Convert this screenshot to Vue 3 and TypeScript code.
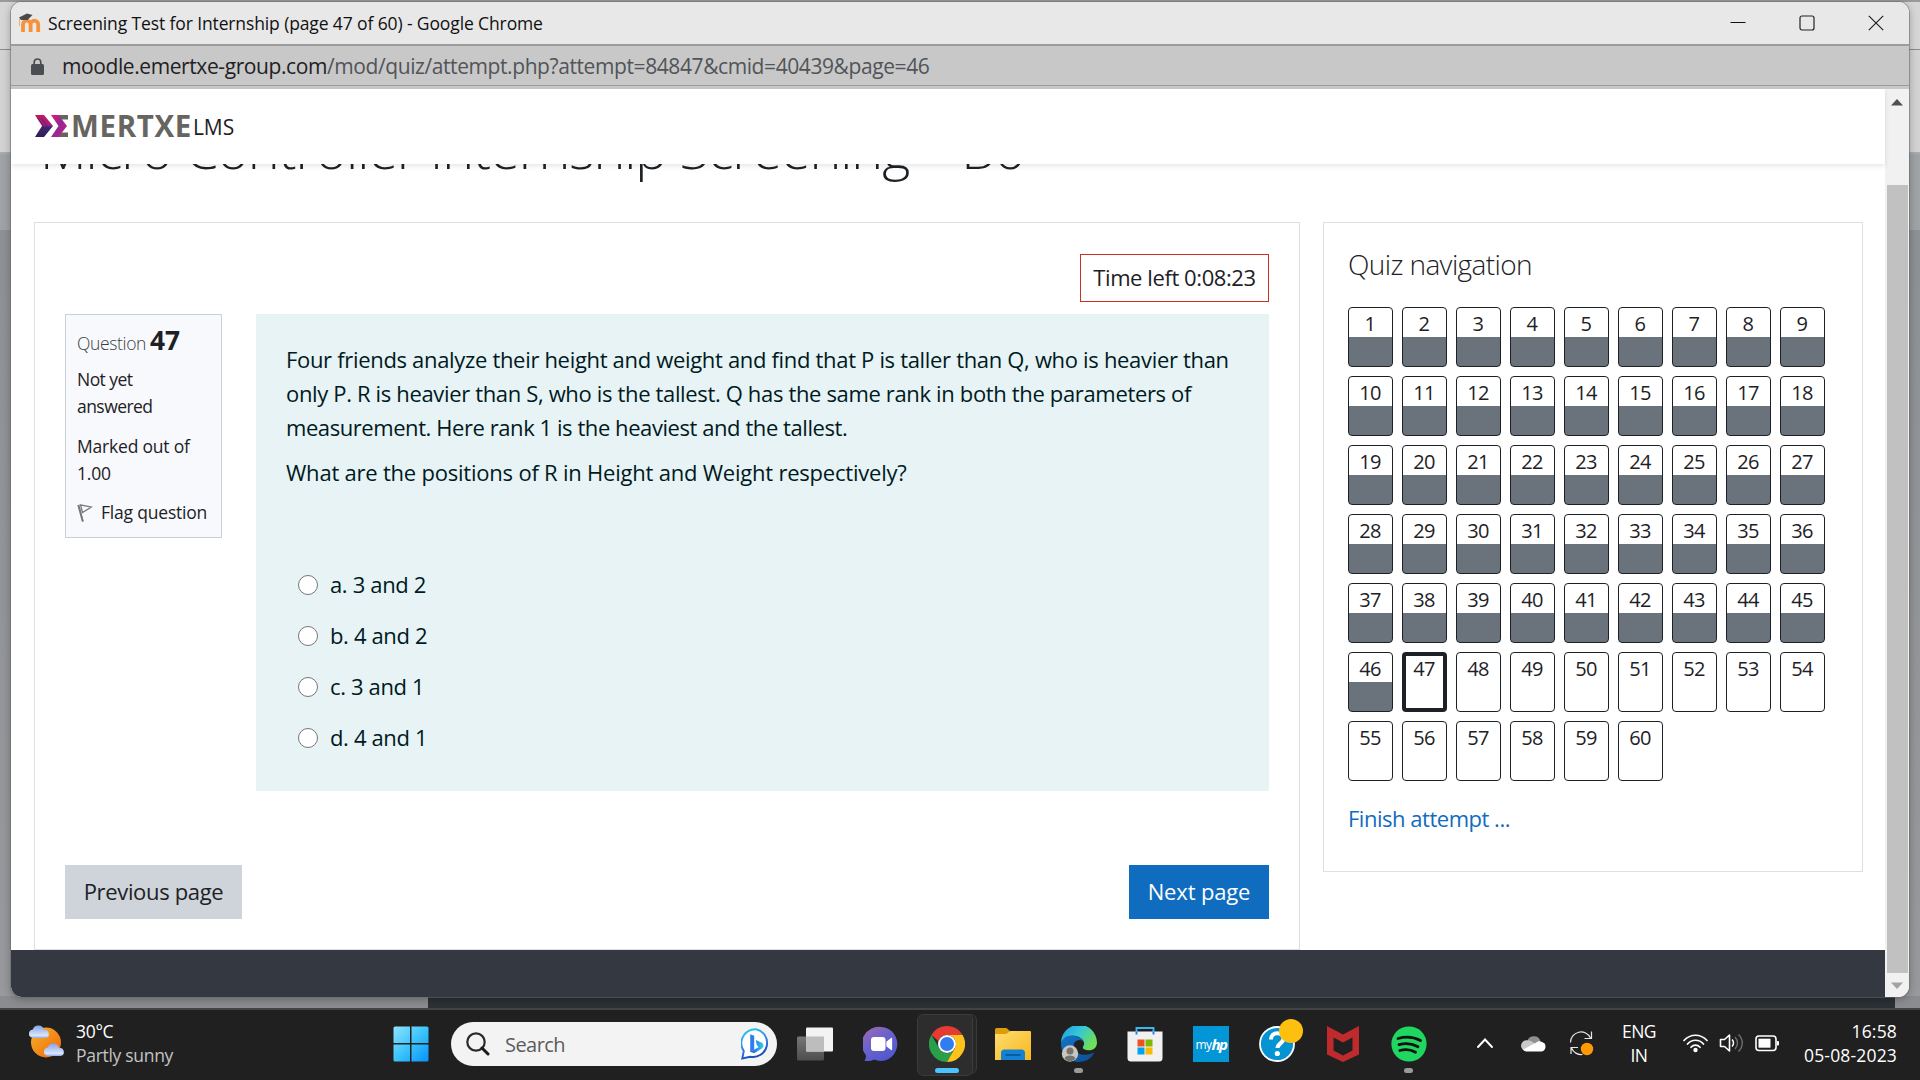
<script setup lang="ts">
interface Option {
  letter: string
  text: string
}

const options: Option[] = [
  { letter: 'a', text: '3 and 2' },
  { letter: 'b', text: '4 and 2' },
  { letter: 'c', text: '3 and 1' },
  { letter: 'd', text: '4 and 1' },
]

const currentQuestion = 47
const questions = Array.from({ length: 60 }, (_, i) => i + 1)
</script>

<template>
  <div class="desktop">
    <div class="backdrop">
      <div class="back-tabs"></div>
      <div class="back-toolbar"></div>
      <div class="back-page"></div>
      <div class="back-footer"><span></span></div>
    </div>

    <section class="window">
      <header class="titlebar">
        <svg class="favicon" width="24" height="22" viewBox="0 0 24 22">
          <path d="M5 20V12.500a3.700 3.700 0 0 1 7.600 0V20M12.600 20V12.500a3.700 3.700 0 0 1 7.600 0V20" fill="none" stroke="#f7923a" stroke-width="3.800" />
          <path d="M1 5.500 9 1.500l5.500 1.500-5 5L3 8z" fill="#4a4a4a" />
          <path d="M1.500 6v8" stroke="#e5b48c" stroke-width="1" />
        </svg>
        <span class="title">Screening Test for Internship (page 47 of 60) - Google Chrome</span>
        <div class="controls">
          <svg width="16" height="16" viewBox="0 0 16 16"><path d="M.5 7.500h15" stroke="#111" stroke-width="1.200" /></svg>
          <svg width="16" height="16" viewBox="0 0 16 16"><rect x="1" y="1" width="14" height="14" rx="2" fill="none" stroke="#222" stroke-width="1.200" /></svg>
          <svg width="16" height="16" viewBox="0 0 16 16"><path d="M.8.800l14.400 14.400M15.200.800.8 15.200" stroke="#222" stroke-width="1.200" /></svg>
        </div>
      </header>

      <div class="urlbar">
        <svg width="13" height="17" viewBox="0 0 13 17">
          <path d="M3.200 7V4.300a3.300 3.300 0 0 1 6.600 0V7" fill="none" stroke="#4a4d51" stroke-width="1.700" />
          <rect x="0" y="6" width="13" height="11" rx="1.500" fill="#4a4d51" />
        </svg>
        <span class="url"><b>moodle.emertxe-group.com</b>/mod/quiz/attempt.php?attempt=84847&amp;cmid=40439&amp;page=46</span>
      </div>

      <div class="viewport">
        <div class="page">
          <nav class="navbar">
            <svg class="mark" width="36" height="22" viewBox="0 0 36 22">
              <defs>
                <linearGradient id="mk1" x1="0" y1="0" x2="0" y2="1">
                  <stop offset="0" stop-color="#c2185f" /><stop offset=".48" stop-color="#9a1f86" />
                  <stop offset=".55" stop-color="#3a2a74" /><stop offset="1" stop-color="#2a2050" />
                </linearGradient>
                <linearGradient id="mk2" x1="0" y1="0" x2="1" y2="1">
                  <stop offset="0" stop-color="#e2187c" /><stop offset=".5" stop-color="#8e2a94" /><stop offset="1" stop-color="#e2187c" />
                </linearGradient>
              </defs>
              <path d="M22 0h11v4.500h-8zM22 22h11v-4.500h-8z" fill="#67655f" />
              <path d="M0 0h9l9 11-9 11H0l7-11z" fill="url(#mk1)" />
              <path d="M2.500 3l6 8-6 8M6 3l6 8-6 8" fill="none" stroke="#5b1550" stroke-width=".7" />
              <path d="M16 0h7.500l8.500 11-8.500 11H16l7.500-11z" fill="url(#mk2)" />
            </svg>
            <span class="brand">MERTXE</span><span class="lms">LMS</span>
          </nav>

          <h1 class="heading">Micro Controller Internship Screening - <span>B6</span></h1>

          <div class="columns">
            <main class="quiz">
              <div class="timer">Time left 0:08:23</div>

              <div class="question">
                <aside class="info">
                  <div class="qno"><span>Question</span><strong>47</strong></div>
                  <div class="state">Not yet<br />answered</div>
                  <div class="grade">Marked out of<br />1.00</div>
                  <div class="flag">
                    <svg width="16" height="18" viewBox="0 0 16 18">
                      <path d="M1.500 1l4.500 16.500M3.500.800 14.500 3 5.500 8.500z" fill="none" stroke="#777" stroke-width="1.300" />
                      <path d="M1.300 1 5.800 17.500" stroke="#777" stroke-width="1.900" />
                    </svg>
                    <span>Flag question</span>
                  </div>
                </aside>

                <div class="formulation">
                  <p>
                    <span class="l1">Four friends analyze their height and weight and find that P is taller than Q, who is heavier than</span><br />
                    <span class="l2">only P. R is heavier than S, who is the tallest. Q has the same rank in both the parameters of</span><br />
                    <span class="l3">measurement. Here rank 1 is the heaviest and the tallest.</span>
                  </p>
                  <p class="l4">What are the positions of R in Height and Weight respectively?</p>
                  <div class="options">
                    <label v-for="o in options" :key="o.letter">
                      <i class="radio"></i><span>{{ o.letter }}. {{ o.text }}</span>
                    </label>
                  </div>
                </div>
              </div>

              <div class="actions">
                <button class="btn prev">Previous page</button>
                <button class="btn next">Next page</button>
              </div>
            </main>

            <aside class="quiznav">
              <h2>Quiz navigation</h2>
              <div class="grid">
                <a
                  v-for="n in questions"
                  :key="n"
                  class="cell"
                  :class="{ saved: n < currentQuestion, current: n === currentQuestion }"
                ><span>{{ n }}</span></a>
              </div>
              <a class="finish">Finish attempt ...</a>
            </aside>
          </div>

          <footer class="pagefoot"></footer>
        </div>

        <div class="scrollbar">
          <svg width="12" height="7" viewBox="0 0 12 7"><path d="M0 6.500 6 0l6 6.500z" fill="#505050" /></svg>
          <div class="thumb"></div>
          <svg class="down" width="12" height="7" viewBox="0 0 12 7"><path d="M0 .5h12L6 7z" fill="#a3a3a3" /></svg>
        </div>
      </div>
    </section>

    <footer class="taskbar">
      <div class="weather">
        <svg width="37" height="34" viewBox="0 0 37 34">
          <defs>
            <linearGradient id="sun" x1="0" y1="0" x2="1" y2="1"><stop offset="0" stop-color="#f3b32b" /><stop offset="1" stop-color="#f2660a" /></linearGradient>
            <linearGradient id="cl" x1="0" y1="0" x2="0" y2="1"><stop offset="0" stop-color="#86a4ea" /><stop offset=".8" stop-color="#d9e5fb" /><stop offset="1" stop-color="#8faae6" /></linearGradient>
          </defs>
          <circle cx="18" cy="18.500" r="15" fill="url(#sun)" />
          <path d="M4.500 14a4.300 4.300 0 0 1 .3-8.500A5.800 5.800 0 0 1 16 6a4 4 0 0 1 1.500 8z" fill="url(#cl)" />
          <path d="M19.500 32a4.300 4.300 0 0 1 .3-8.500 5.800 5.800 0 0 1 11.200.5 4 4 0 0 1 1.500 8z" fill="url(#cl)" />
        </svg>
        <div class="wtext"><span>30°C</span><span class="dim">Partly sunny</span></div>
      </div>

      <svg class="start" width="36" height="36" viewBox="0 0 36 36">
        <defs>
          <linearGradient id="win" x1="0" y1="0" x2="1" y2="1"><stop offset="0" stop-color="#8fe3ff" /><stop offset=".5" stop-color="#3cc4fb" /><stop offset="1" stop-color="#0792fb" /></linearGradient>
        </defs>
        <path d="M2 .500h15v16.500H.5V2A1.500 1.500 0 0 1 2 .5zM18.500.500H34A1.500 1.500 0 0 1 35.500 2v15h-17zM.5 18.500H17v17H2A1.500 1.500 0 0 1 .5 34zM18.500 18.500h17V34a1.500 1.500 0 0 1-1.500 1.500H18.500z" fill="url(#win)" />
      </svg>

      <div class="search">
        <svg width="24" height="24" viewBox="0 0 24 24"><circle cx="10" cy="10" r="8.700" fill="none" stroke="#2b2b2b" stroke-width="2.200" /><path d="M16 16l6 6" stroke="#1b1b1b" stroke-width="3" stroke-linecap="round" /></svg>
        <span>Search</span>
        <svg class="bing" width="30" height="32" viewBox="0 0 30 32">
          <defs>
            <linearGradient id="bg1" x1="0" y1="0" x2=".4" y2="1"><stop offset="0" stop-color="#22d3ee" /><stop offset=".5" stop-color="#3a8cf0" /><stop offset="1" stop-color="#1b49b8" /></linearGradient>
            <linearGradient id="bg2" x1="0" y1="0" x2="1" y2="0"><stop offset="0" stop-color="#2454e6" /><stop offset="1" stop-color="#2fd0ee" /></linearGradient>
          </defs>
          <path d="M15 1.200a14 14 0 1 1-6 27.500L1.300 30.500l1.500-7.500A14 14 0 0 1 15 1.200z" fill="#fff" stroke="url(#bg1)" stroke-width="1.900" />
          <path d="M9.200 6.200l4 1.600v13.700l-4 2.700z" fill="#2f7cf0" />
          <path d="M14.800 12l6.200 2.700c1.800 1 2 4.300.3 5.500l-8 5-4.100-1.500 8.300-4.500-1.800-2.500z" fill="url(#bg2)" />
        </svg>
      </div>

      <div class="apps">
        <div class="app">
          <svg width="36" height="36" viewBox="0 0 36 36">
            <defs><linearGradient id="tv" x1="0" y1="0" x2="0" y2="1"><stop offset="0" stop-color="#767676" /><stop offset="1" stop-color="#4d4d4d" /></linearGradient></defs>
            <rect x="0" y="10.500" width="27" height="24" rx="1.500" fill="url(#tv)" />
            <rect x="9" y="1.500" width="27" height="24" rx="1" fill="#f3f3f3" />
            <path d="M9 10.500h18v15H9z" fill="#bdbdbd" />
          </svg>
        </div>
        <div class="app">
          <svg width="36" height="36" viewBox="0 0 36 36">
            <defs><linearGradient id="tm" x1="0" y1="0" x2=".7" y2="1"><stop offset="0" stop-color="#a06ab0" /><stop offset=".5" stop-color="#6a62cc" /><stop offset="1" stop-color="#5058cf" /></linearGradient></defs>
            <path d="M18 1a16.500 17 0 1 1-7 32.500c-3 1.500-6.500 1.800-9.500 1.200 1.500-2 1.600-4 1.200-6A17 17 0 0 1 18 1z" fill="url(#tm)" />
            <rect x="8" y="11" width="14.500" height="14" rx="3" fill="#fff" />
            <path d="M24 16l4.500-3.500v11L24 20z" fill="#fff" stroke="#fff" stroke-width="1.300" stroke-linejoin="round" />
          </svg>
        </div>
        <div class="app active">
          <i class="stack"></i>
          <svg width="36" height="36" viewBox="0 0 36 36">
            <path d="M2.400 9A18 18 0 0 1 33.600 9H18a9 9 0 0 0-8.500 6z" fill="#e53b30" />
            <path d="M2.400 9A18 18 0 0 0 18 36l8-13.500A9 9 0 0 1 10 22z" fill="#2a9f49" />
            <path d="M33.600 9A18 18 0 0 1 18 36l7.800-13.500A9 9 0 0 0 18 9z" fill="#fcc31c" />
            <circle cx="18" cy="18" r="9" fill="#fff" /><circle cx="18" cy="18" r="7" fill="#2f7df0" />
          </svg>
          <i class="run wide"></i>
        </div>
        <div class="app">
          <svg width="36" height="36" viewBox="0 0 36 36">
            <defs><linearGradient id="fd" x1="0" y1="0" x2="1" y2="1"><stop offset="0" stop-color="#ffdd72" /><stop offset="1" stop-color="#f6b71b" /></linearGradient></defs>
            <path d="M0 3.500A1.500 1.500 0 0 1 1.500 2h10l4 3.500V12H0z" fill="#dc9c0c" />
            <path d="M0 8h11l4.500-3H35a1 1 0 0 1 1 1v28H0z" fill="url(#fd)" />
            <path d="M6 34v-7a3.500 3.500 0 0 1 3.500-3.500h17A3.500 3.500 0 0 1 30 27v7z" fill="#1481d2" />
            <path d="M11 29h14" stroke="#0a4f92" stroke-width="1.400" stroke-linecap="round" />
          </svg>
        </div>
        <div class="app">
          <svg width="36" height="36" viewBox="0 0 36 36">
            <defs>
              <linearGradient id="eg" x1="0" y1="0" x2="1" y2=".5"><stop offset="0" stop-color="#2497dc" /><stop offset=".5" stop-color="#33c6dc" /><stop offset="1" stop-color="#6fdf57" /></linearGradient>
              <linearGradient id="eb" x1="0" y1="0" x2="1" y2="1"><stop offset="0" stop-color="#1277c6" /><stop offset="1" stop-color="#0d4b92" /></linearGradient>
            </defs>
            <path d="M0 17A18 18 0 0 1 36 16.500c0 5-3.500 7.800-8 7.800-4 0-6.800-1.500-6-3.500.8-1.300 1.300-2.300 1-4C22 12.500 17 9.500 12 9.800 6 10 2 13 0 17z" fill="url(#eg)" />
            <path d="M0 18c1-6 6-9 11.500-8.500C17 10 21 12.500 22.500 15c-7-3-11 2-9.500 7 1.500 5.500 8 9.500 20.500 4.500A18 18 0 0 1 18 36C8 36 0 28 0 18z" fill="url(#eb)" />
            <circle cx="9" cy="27.500" r="8.200" fill="#c9c6c2" /><circle cx="9" cy="25" r="3.500" fill="#77736f" /><path d="M3.500 32.500c1-4 10-4 11 0-3 3.500-8 3.500-11 0z" fill="#77736f" />
          </svg>
          <i class="run"></i>
        </div>
        <div class="app">
          <svg width="36" height="36" viewBox="0 0 36 36">
            <path d="M9.500 8V2h17v6" fill="none" stroke="#38b6f5" stroke-width="1.900" />
            <path d="M.5 5.500h35V32a3.500 3.500 0 0 1-3.500 3.500H4A3.500 3.500 0 0 1 .5 32z" fill="#f1f1f1" />
            <path d="M9.500 8.500V5.500M26.500 8.500V5.500" stroke="#1a86d8" stroke-width="1.900" />
            <path d="M10.500 13.500h7v7h-7z" fill="#f04e23" /><path d="M18.500 13.500h7v7h-7z" fill="#7db900" />
            <path d="M10.500 21.500h7v7h-7z" fill="#02a3ee" /><path d="M18.500 21.500h7v7h-7z" fill="#fdb800" />
          </svg>
        </div>
        <div class="app"><div class="myhp"><span>my</span><em>hp</em></div></div>
        <div class="app">
          <svg width="46" height="50" viewBox="0 0 46 50" class="help">
            <circle cx="18" cy="25" r="17" fill="#0494d4" stroke="#fff" stroke-width="1.800" />
            <path d="M12 20.500c0-4 2.600-6.300 6.200-6.300 3.800 0 6.300 2.200 6.300 5.400 0 4.700-6 4.900-6 9.400" fill="none" stroke="#fff" stroke-width="4" />
            <circle cx="18.300" cy="34.500" r="2.600" fill="#fff" />
            <circle cx="32" cy="12" r="12" fill="#fdc00f" />
          </svg>
        </div>
        <div class="app">
          <svg width="36" height="36" viewBox="0 0 36 36"><path d="M2 0l16 8.500L34 0v28.500L18 36 2 28.500zM8.500 11.500v13L18 29.500l9.500-5v-13L18 16.500z" fill="#bf2b2c" fill-rule="evenodd" /></svg>
        </div>
        <div class="app">
          <svg width="36" height="36" viewBox="0 0 36 36">
            <circle cx="18" cy="18" r="17.600" fill="#1fd760" />
            <path d="M7 12.500c7.500-2.200 16-1.500 22.500 2M8 18.700c6.500-1.900 13.500-1 19 2M8.800 24.500c5.500-1.500 11-1 15.700 1.700" fill="none" stroke="#111" stroke-width="2.800" stroke-linecap="round" />
          </svg>
          <i class="run"></i>
        </div>
      </div>

      <div class="tray">
        <svg class="chev" width="18" height="12" viewBox="0 0 18 12"><path d="M2 10l7-7.500L16 10" fill="none" stroke="#fff" stroke-width="1.900" stroke-linecap="round" /></svg>
        <svg class="cloud" width="25" height="17" viewBox="0 0 25 17">
          <path d="M6.500 5.500A7 7 0 0 1 19.500 6l-7 5z" fill="#909090" />
          <path d="M4.500 16A5.200 5.200 0 0 1 6.500 5.300c4 .3 6.500 2.700 8.500 4.200L5 16z" fill="#c9c9c9" />
          <path d="M2 14.500 14 8.300c2.500-2.300 5.500-2.600 7-1.200A4.800 4.800 0 0 1 20 16.500H5A5 5 0 0 1 2 14.500z" fill="#fff" />
        </svg>
        <svg class="sync" width="25" height="26" viewBox="0 0 25 26">
          <path d="M1.500 12.500A10.500 10.500 0 0 1 21.500 8M22.500 1.500V8.500H15.500M2 24V17.500H9M2.500 18a10.500 10.500 0 0 0 11 6.500" fill="none" stroke="#e6e6e6" stroke-width="1.200" />
          <circle cx="18" cy="19" r="6.200" fill="#ff9a05" />
        </svg>
        <div class="lang"><span>ENG</span><span>IN</span></div>
        <svg class="wifi" width="25" height="20" viewBox="0 0 25 20">
          <path d="M1 7.500c6.500-7 16.500-7 23 0M4.500 11c4.500-5 11.500-5 16 0M8 14.300c2.500-2.800 6.500-2.800 9 0" fill="none" stroke="#fff" stroke-width="1.700" stroke-linecap="round" /><circle cx="12.500" cy="17" r="2.200" fill="#fff" />
        </svg>
        <svg class="vol" width="26" height="20" viewBox="0 0 26 20">
          <path d="M1.500 6.500H5.500L10.500 2v16L5.500 13.500H1.500z" fill="none" stroke="#fff" stroke-width="1.600" stroke-linejoin="round" />
          <path d="M13 6.500c2 2 2 5 0 7" fill="none" stroke="#fff" stroke-width="1.500" /><path d="M16 4c3.300 3.500 3.300 8.500 0 12M19.500 1.500c5 5 5 12 0 17" fill="none" stroke="#6e6e6e" stroke-width="1.400" />
        </svg>
        <svg class="bat" width="25" height="17" viewBox="0 0 25 17">
          <rect x="1" y="1" width="20" height="14.500" rx="3" fill="none" stroke="#fff" stroke-width="1.600" /><rect x="3.500" y="3.700" width="12" height="9" fill="#fff" /><path d="M22 6h1a1 1 0 0 1 1 1v2.500a1 1 0 0 1-1 1h-1z" fill="#fff" />
        </svg>
        <div class="clock"><span>16:58</span><span>05-08-2023</span></div>
      </div>
    </footer>
  </div>
</template>

<style>
html,
body {
  margin: 0;
  overflow: hidden;
}
</style>

<style scoped>
* {
  box-sizing: border-box;
}
svg {
  display: block;
  flex: none;
}
.desktop {
  position: relative;
  width: 1920px;
  height: 1080px;
  display: flex;
  flex-direction: column;
  overflow: hidden;
  font-family: 'Open Sans', 'Noto Sans', sans-serif;
  font-size: 22px;
  color: #1d2125;
  white-space: nowrap;
}

/* browser window lying behind */
.backdrop {
  height: 1008px;
  display: flex;
  flex-direction: column;
}
.back-tabs {
  height: 50px;
  flex: none;
  background: linear-gradient(#999 0 2px, #d6d6d6 2px);
  border-bottom: 1px solid #8c8c8c;
}
.back-toolbar {
  height: 104px;
  flex: none;
  background: #d3d3d3;
  border-bottom: 2px solid #a9abad;
}
.back-page {
  flex: 1;
  background: linear-gradient(#9fa3a6 0 76px, #8d9195 76px, #98999c);
}
.back-footer {
  height: 12px;
  background: #8b8c8f;
}
.back-footer span {
  display: block;
  height: 12px;
  margin-left: 428px;
  width: 1467px;
  background: #2b3135;
}

/* popup window */
.window {
  position: absolute;
  left: 11px;
  top: 2px;
  width: 1898px;
  height: 995px;
  display: flex;
  flex-direction: column;
  background: #fff;
  border-radius: 11px;
  overflow: hidden;
  box-shadow: 0 0 0 1px rgba(110, 110, 110, 0.55), 0 2px 8px rgba(0, 0, 0, 0.3);
}
.titlebar {
  height: 44px;
  flex: none;
  display: flex;
  align-items: center;
  background: #e8e8e8;
  border-bottom: 2px solid #9c9c9c;
}
.favicon {
  margin-left: 7px;
}
.title {
  margin: 0 0 0 6px;
  font-size: 17.5px;
  letter-spacing: -0.12px;
  color: #111;
}
.controls {
  margin-left: auto;
  display: flex;
  gap: 53px;
  padding-right: 25px;
}
.urlbar {
  height: 43px;
  flex: none;
  display: flex;
  align-items: center;
  background: linear-gradient(#c8c8c8 0 39px, #9c9c9c 39px 40px, #c8c8c8 40px);
  padding: 0 0 3px 20px;
}
.url {
  margin-left: 18px;
  font-size: 21px;
  letter-spacing: -0.41px;
  color: #515458;
}
.url b {
  font-weight: 400;
  color: #1f2124;
}
.viewport {
  flex: 1;
  display: flex;
  min-height: 0;
}
.page {
  flex: 1;
  display: flex;
  flex-direction: column;
  background: #fff;
}
.navbar {
  position: relative;
  z-index: 1;
  height: 75px;
  flex: none;
  display: flex;
  align-items: baseline;
  padding: 26px 0 0 24px;
  background: #fff;
  box-shadow: 0 2px 5px rgba(0, 0, 0, 0.1);
}
.brand {
  font-size: 29.5px;
  font-weight: 700;
  line-height: 21px;
  letter-spacing: 0.65px;
  color: #67655f;
}
.lms {
  margin-left: 1px;
  font-size: 21px;
  line-height: 21px;
  letter-spacing: -0.1px;
  position: relative;
  top: -2px;
}
.heading {
  margin: -43px 0 47px 29px;
  font-size: 54px;
  line-height: 54px;
  font-weight: 300;
  letter-spacing: -1.08px;
}
.heading span {
  margin-left: 10px;
}
.columns {
  display: flex;
  align-items: flex-start;
  gap: 23px;
  padding-left: 23px;
}
.quiz {
  width: 1266px;
  height: 728px;
  flex: none;
  display: flex;
  flex-direction: column;
  border: 1px solid #dedfe0;
  padding: 31px 30px 0;
}
.timer {
  align-self: flex-end;
  width: 189px;
  height: 48px;
  line-height: 44px;
  text-align: center;
  border: 1px solid #ca3120;
  letter-spacing: -0.42px;
}
.question {
  margin-top: 12px;
  display: flex;
  justify-content: space-between;
  align-items: flex-start;
}
.info {
  width: 157px;
  height: 224px;
  padding: 10px 0 0 11px;
  border: 1px solid #cad0d7;
  background: #f8f9fc;
  font-size: 17.5px;
  line-height: 27px;
  letter-spacing: -0.2px;
}
.qno {
  display: flex;
  align-items: baseline;
  line-height: 30px;
}
.qno span {
  font-weight: 300;
  color: #3a3f44;
  letter-spacing: -0.35px;
}
.qno strong {
  margin-left: 4px;
  font-size: 26.3px;
}
.state {
  margin-top: 8px;
  letter-spacing: -0.55px;
}
.grade {
  margin-top: 13px;
}
.flag {
  margin-top: 12px;
  display: flex;
  align-items: center;
  gap: 8px;
}
.formulation {
  width: 1013px;
  height: 477px;
  padding: 28px 0 0 30px;
  background: #e7f3f5;
  color: #001a1e;
}
.formulation p {
  margin: 0 0 11px;
  line-height: 34px;
}
.l1 {
  letter-spacing: -0.32px;
}
.l2 {
  letter-spacing: -0.346px;
}
.l3 {
  letter-spacing: -0.43px;
}
.formulation .l4 {
  letter-spacing: -0.215px;
  margin-bottom: 70px;
}
.options label {
  display: flex;
  align-items: center;
  height: 51px;
  padding-left: 12px;
  letter-spacing: -0.35px;
}
.options label span {
  padding-bottom: 2px;
}
.radio {
  width: 20px;
  height: 20px;
  margin-right: 12px;
  border: 1.500px solid #767676;
  border-radius: 50%;
  background: #fff;
}
.actions {
  margin-top: 74px;
  display: flex;
  justify-content: space-between;
}
.btn {
  height: 54px;
  padding: 0 0 2px;
  border: 0;
  font: inherit;
}
.prev {
  width: 177px;
  background: #ced4da;
  color: #1d2125;
  letter-spacing: -0.34px;
}
.next {
  width: 140px;
  background: #0f6cbf;
  color: #fff;
  letter-spacing: -0.15px;
}
.quiznav {
  width: 540px;
  height: 650px;
  border: 1px solid #dedfe0;
  padding: 24px 0 0 24px;
}
.quiznav h2 {
  margin: 0 0 26px;
  font-size: 28px;
  line-height: 34px;
  font-weight: 300;
  letter-spacing: -0.6px;
}
.grid {
  display: grid;
  grid-template-columns: repeat(9, 45px);
  grid-auto-rows: 60px;
  gap: 9px;
}
.cell {
  display: block;
  border: 1px solid #1d2125;
  border-radius: 4px;
  padding-right: 1px;
  text-align: center;
  font-size: 20px;
  line-height: 32px;
  letter-spacing: -0.6px;
  background: #fff;
}
.saved {
  background: linear-gradient(#fff 0 29px, #6a737b 29px);
}
.current {
  border-width: 4px;
  line-height: 26px;
}
.finish {
  display: block;
  margin-top: 20px;
  line-height: 34px;
  letter-spacing: -0.48px;
  color: #0f6cbf;
}
.pagefoot {
  flex: 1;
  background: #343841;
}
.scrollbar {
  width: 24px;
  display: flex;
  flex-direction: column;
  align-items: center;
  padding-top: 10px;
  background: #f1f1f1;
}
.thumb {
  width: 21px;
  height: 788px;
  margin: 79px 0 9px;
  flex: none;
  background: #c1c1c1;
}

/* taskbar */
.taskbar {
  height: 72px;
  flex: none;
  display: flex;
  align-items: flex-start;
  background: #202020;
  border-top: 2px solid #434343;
  color: #fff;
  font-size: 17.5px;
}
.weather {
  display: flex;
  width: 365px;
  padding: 14px 0 0 28px;
  gap: 11px;
}
.wtext {
  display: flex;
  flex-direction: column;
  line-height: 24px;
  letter-spacing: -0.3px;
  margin-top: -5px;
}
.dim {
  color: #c4c4c4;
}
.start {
  margin: 16px 0 0 28px;
}
.search {
  width: 326px;
  height: 44px;
  margin: 12px 0 0 22px;
  padding: 0 6px 0 15px;
  display: flex;
  align-items: center;
  border-radius: 22px;
  background: #f3f3f3;
  color: #5c5c5c;
  font-size: 20px;
  letter-spacing: -0.55px;
}
.search span {
  margin-left: 15px;
}
.bing {
  margin-left: auto;
}
.apps {
  display: flex;
  margin-left: 5px;
}
.app {
  position: relative;
  width: 66px;
  height: 68px;
  display: flex;
  align-items: center;
  justify-content: center;
}
.active::before {
  content: '';
  position: absolute;
  z-index: 1;
  left: 3px;
  top: 4px;
  width: 54px;
  height: 60px;
  background: #2d2d2d;
  border: 1px solid #3b3b3b;
  border-radius: 6px;
}
.active .stack {
  position: absolute;
  left: 12px;
  top: 4px;
  width: 51px;
  height: 60px;
  border: 1px solid #383838;
  background: #272727;
  border-radius: 6px;
}
.active svg {
  position: relative;
  z-index: 2;
}
.run {
  position: absolute;
  z-index: 2;
  left: 28px;
  bottom: 5px;
  width: 9px;
  height: 5px;
  border-radius: 3px;
  background: #9a9a9a;
}
.run.wide {
  left: 21px;
  width: 24px;
  background: #4cc2ff;
}
.myhp {
  width: 36px;
  height: 36px;
  display: flex;
  align-items: center;
  justify-content: center;
  background: #0296d6;
  font-size: 12px;
  letter-spacing: -0.6px;
}
.myhp em {
  font-size: 15px;
  font-weight: 700;
  letter-spacing: -1.500px;
}
.help {
  position: relative;
  left: 5px;
}
.tray {
  margin-left: auto;
  display: flex;
  align-items: center;
  height: 66px;
  padding-right: 23px;
}
.cloud {
  margin-left: 27px;
}
.sync {
  margin-left: 23px;
}
.lang,
.clock {
  display: flex;
  flex-direction: column;
  line-height: 24px;
}
.lang {
  width: 36px;
  margin-left: 27px;
  align-items: center;
  letter-spacing: -0.5px;
}
.wifi {
  margin-left: 26px;
}
.vol {
  margin-left: 11px;
}
.bat {
  margin-left: 10px;
}
.clock {
  width: 117px;
  align-items: flex-end;
  letter-spacing: 0.17px;
}
</style>
